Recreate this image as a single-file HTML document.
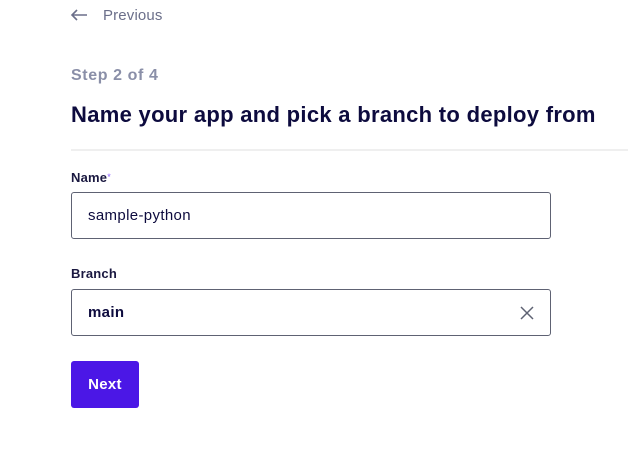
<!DOCTYPE html>
<html><head><meta charset="utf-8"><style>
*{box-sizing:border-box;margin:0;padding:0}
body{width:628px;height:461px;background:#fff;font-family:"Liberation Sans",sans-serif;position:relative;overflow:hidden}
.abs{position:absolute}
.prev{left:103px;top:7px;font-size:15px;color:#6b6f8a;line-height:18px;letter-spacing:0.15px}
.step{left:71px;top:66px;font-size:16px;font-weight:bold;color:#8a8fa8;line-height:20px;letter-spacing:0.6px}
h1{position:absolute;left:71px;top:102px;font-size:22px;font-weight:bold;color:#0d0b3e;line-height:26px;letter-spacing:0.3px}
.hr{left:71px;top:149px;width:557px;height:2px;background:#efefef}
.lbl{left:71px;font-size:13px;font-weight:bold;color:#1a1840;line-height:16px;letter-spacing:0.2px}
.lbl sup{color:#8a5cff;font-size:9px;font-weight:normal;vertical-align:top;position:relative;top:-1px}
.inp{left:71px;width:480px;height:47px;border:1px solid #5e6273;border-radius:3px;padding-left:16px;font-size:15px;color:#0d0b3e;line-height:46px;letter-spacing:0.35px}
.btn{left:71px;top:361px;width:68px;height:47px;background:#4b17e6;border-radius:3px;color:#fff;font-size:15px;font-weight:bold;text-align:center;line-height:47px;letter-spacing:0.3px}
</style></head><body>
<svg class="abs" style="left:70px;top:8px" width="18" height="14" viewBox="0 0 18 14"><path d="M17 7H2M7 2L2 7l5 5" fill="none" stroke="#6b6f8a" stroke-width="1.6"/></svg>
<div class="abs prev">Previous</div>
<div class="abs step">Step 2 of 4</div>
<h1>Name your app and pick a branch to deploy from</h1>
<div class="abs hr"></div>
<div class="abs lbl" style="top:170px">Name<sup>*</sup></div>
<div class="abs inp" style="top:192px">sample-python</div>
<div class="abs lbl" style="top:266px">Branch</div>
<div class="abs inp" style="top:289px;font-weight:bold">main</div>
<svg class="abs" style="left:520px;top:306px" width="14" height="14" viewBox="0 0 14 14"><path d="M1 1L13 13M13 1L1 13" stroke="#5e6273" stroke-width="1.5"/></svg>
<div class="abs btn">Next</div>
</body></html>
